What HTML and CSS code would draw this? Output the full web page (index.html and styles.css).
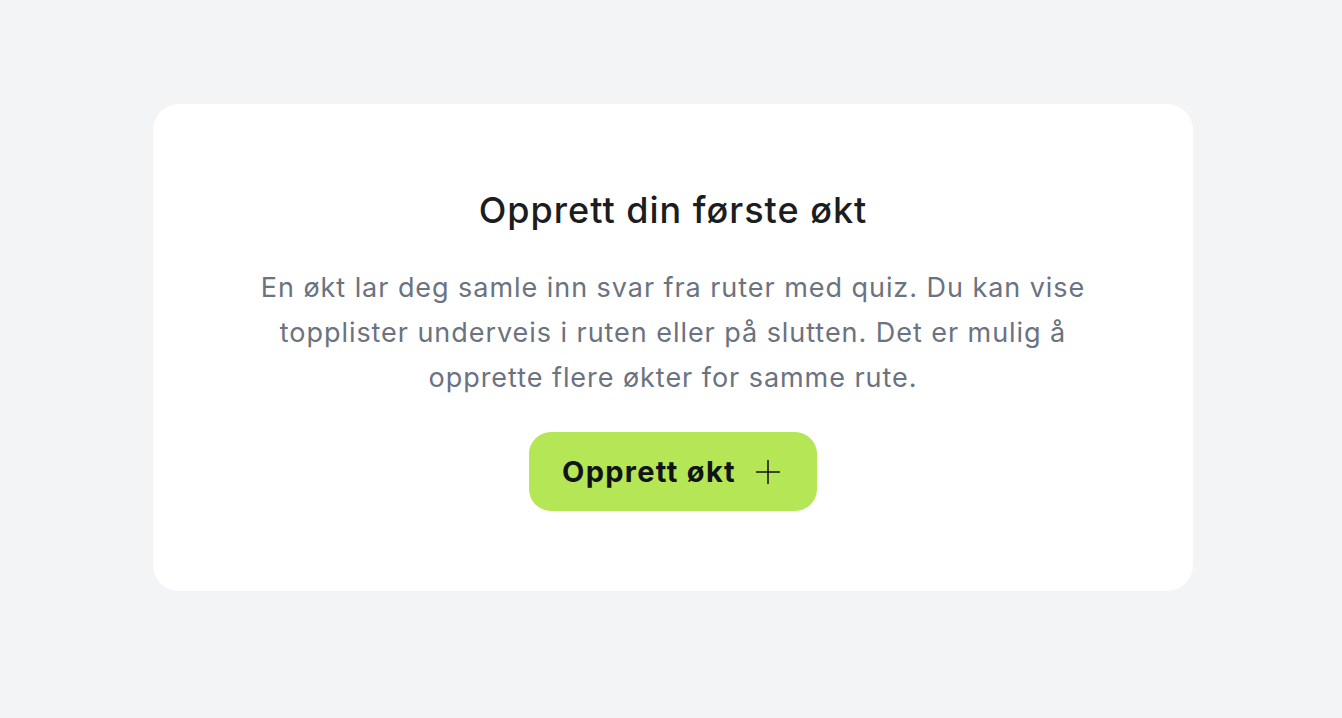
FILE: index.html
```html
<!DOCTYPE html>
<html lang="no">
<head>
<meta charset="utf-8">
<link rel="stylesheet" href="styles.css">
</head>
<body>
<main class="page">
  <section class="card">
    <h1 class="title">Opprett din første økt</h1>
    <p class="text">En økt lar deg samle inn svar fra ruter med quiz. Du kan vise topplister underveis i ruten eller på slutten. Det er mulig å opprette flere økter for samme rute.</p>
    <button class="btn" type="button">
      <span>Opprett økt</span>
      <svg class="plus" viewBox="0 0 24 24" width="26" height="26" fill="none" stroke="currentColor" stroke-width="1.4" stroke-linecap="round"><path d="M12 1.5v21M1.5 12h21"/></svg>
    </button>
  </section>
</main>
</body>
</html>
```
FILE: styles.css
```css
html, body {
  margin: 0;
  padding: 0;
  background: #f3f4f6;
  font-family: Inter, "Noto Sans", sans-serif;
}
.page {
  display: flex;
  justify-content: center;
  padding: 104px 0 0 4px;
}
.card {
  width: 1040px;
  box-sizing: border-box;
  background: #ffffff;
  border-radius: 26px;
  padding: 82px 60px 80px;
  display: flex;
  flex-direction: column;
  align-items: center;
  text-align: center;
}
.title {
  margin: 0;
  font-size: 36px;
  line-height: 48px;
  font-weight: 500;
  color: #1c1d1f;
  letter-spacing: 1px;
}
.text {
  margin: 31px 0 0;
  max-width: 840px;
  font-size: 27px;
  line-height: 45px;
  color: #6b7280;
  letter-spacing: 0.95px;
}
.btn {
  margin-top: 32px;
  height: 79px;
  padding: 0 36px 0 33px;
  border: none;
  border-radius: 22px;
  background: #b5e655;
  color: #111317;
  font-family: inherit;
  font-size: 29px;
  font-weight: 700;
  letter-spacing: 1.3px;
  display: flex;
  align-items: center;
  gap: 19px;
}
.plus { display: block; }
```
